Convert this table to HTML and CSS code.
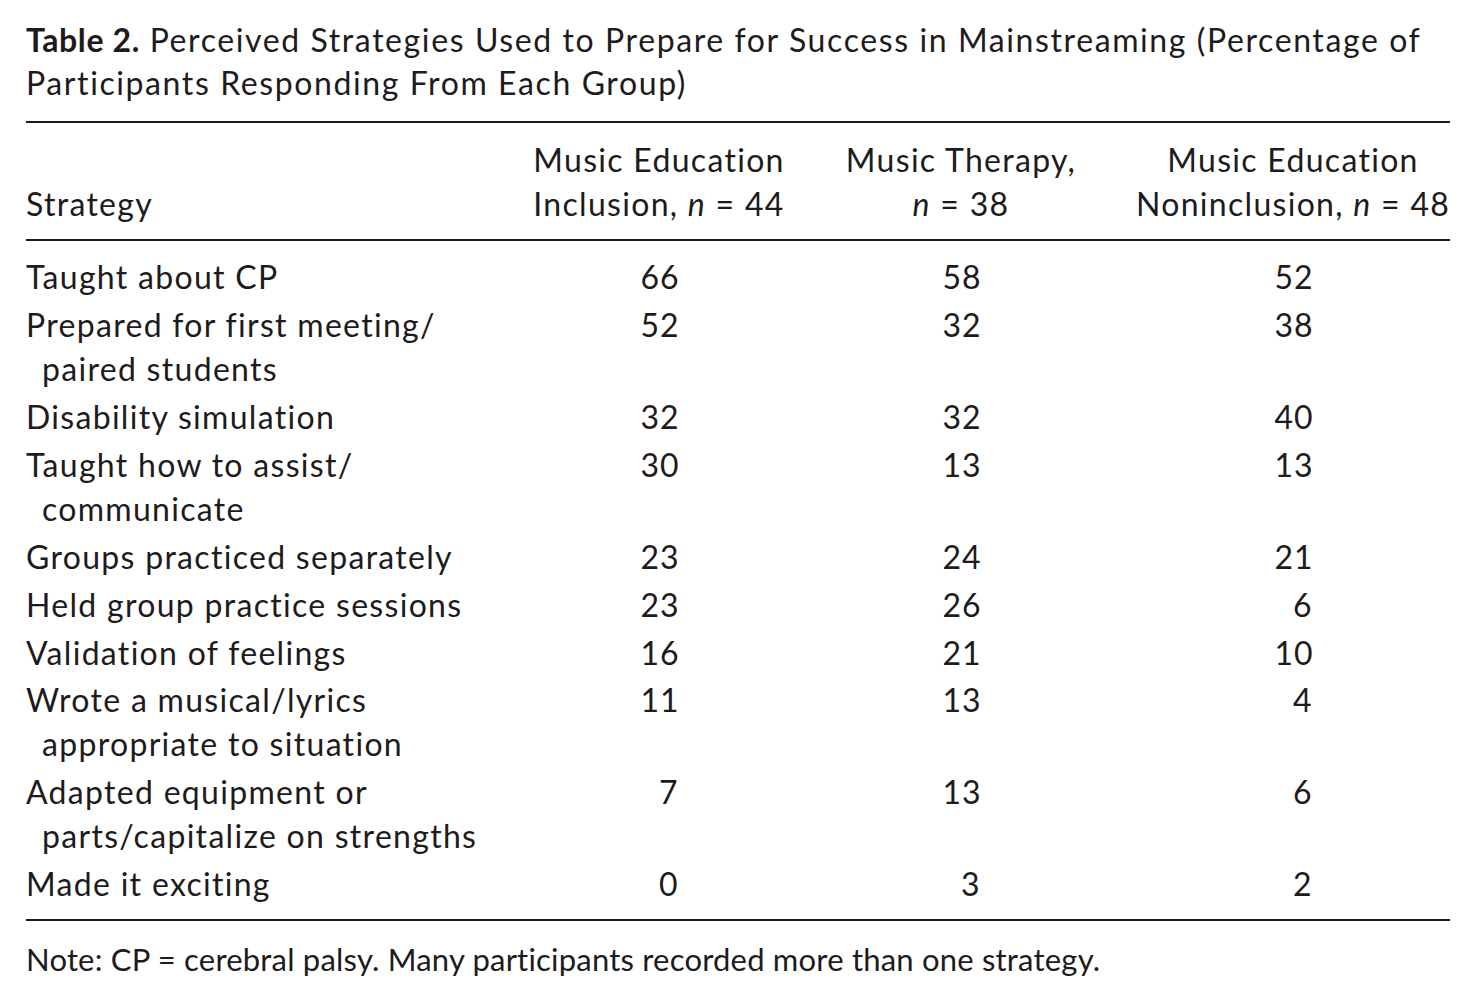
FILE: index.html
```html
<!DOCTYPE html>
<html lang="en">
<head>
<meta charset="utf-8">
<title>Table 2</title>
<link rel="stylesheet" href="styles.css">
</head>
<body>
<div class="page">
  <p class="caption"><b>Table 2.</b> Perceived Strategies Used to Prepare for Success in Mainstreaming (Percentage of<br>Participants Responding From Each Group)</p>
  <div class="table">
    <div class="head">
      <div class="hc first">Strategy</div>
      <div class="hc">Music Education<br>Inclusion, <i>n</i> = 44</div>
      <div class="hc">Music Therapy,<br><i>n</i> = 38</div>
      <div class="hc">Music Education<br>Noninclusion, <i>n</i> = 48</div>
    </div>
    <div class="body">
      <div class="row"><div class="label">Taught about CP</div><div class="num"><span>66</span></div><div class="num"><span>58</span></div><div class="num"><span>52</span></div></div>
      <div class="row"><div class="label">Prepared for first meeting/<br><span class="ind">paired students</span></div><div class="num"><span>52</span></div><div class="num"><span>32</span></div><div class="num"><span>38</span></div></div>
      <div class="row"><div class="label">Disability simulation</div><div class="num"><span>32</span></div><div class="num"><span>32</span></div><div class="num"><span>40</span></div></div>
      <div class="row"><div class="label">Taught how to assist/<br><span class="ind">communicate</span></div><div class="num"><span>30</span></div><div class="num"><span>13</span></div><div class="num"><span>13</span></div></div>
      <div class="row"><div class="label">Groups practiced separately</div><div class="num"><span>23</span></div><div class="num"><span>24</span></div><div class="num"><span>21</span></div></div>
      <div class="row"><div class="label">Held group practice sessions</div><div class="num"><span>23</span></div><div class="num"><span>26</span></div><div class="num"><span>6</span></div></div>
      <div class="row"><div class="label">Validation of feelings</div><div class="num"><span>16</span></div><div class="num"><span>21</span></div><div class="num"><span>10</span></div></div>
      <div class="row"><div class="label">Wrote a musical/lyrics<br><span class="ind">appropriate to situation</span></div><div class="num"><span>11</span></div><div class="num"><span>13</span></div><div class="num"><span>4</span></div></div>
      <div class="row"><div class="label">Adapted equipment or<br><span class="ind">parts/capitalize on strengths</span></div><div class="num"><span>7</span></div><div class="num"><span>13</span></div><div class="num"><span>6</span></div></div>
      <div class="row"><div class="label">Made it exciting</div><div class="num"><span>0</span></div><div class="num"><span>3</span></div><div class="num"><span>2</span></div></div>
    </div>
  </div>
  <p class="note">Note: CP = cerebral palsy. Many participants recorded more than one strategy.</p>
</div>
</body>
</html>
```
FILE: styles.css
```css
html, body {
  margin: 0;
  padding: 0;
  background: #ffffff;
}
body {
  font-family: Lato, "Noto Sans", "DejaVu Sans", sans-serif;
  font-size: 32px;
  letter-spacing: 1.3px;
  color: #1d1b1c;
}
.page {
  width: 1424px;
  padding: 18px 0 0 26px;
}
.caption {
  margin: 0;
  line-height: 43px;
  letter-spacing: 1.6px;
  white-space: nowrap;
}
.caption b {
  font-weight: 700;
  letter-spacing: 0.6px;
}
.table {
  margin-top: 17px;
  border-top: 2px solid #1d1b1c;
  border-bottom: 2px solid #1d1b1c;
}
.head, .row {
  display: grid;
  grid-template-columns: 506px 254px 350px 314px;
}
.head {
  padding: 15px 0 13px;
  line-height: 44px;
  border-bottom: 2px solid #1d1b1c;
}
.hc {
  text-align: center;
  white-space: nowrap;
  align-self: end;
}
.hc.first {
  text-align: left;
}
.body {
  padding: 12px 0 11px;
}
.row {
  padding: 2px 0;
  line-height: 44px;
}
.row:nth-child(n+5) {
  padding: 2px 0 1.8px;
}
.label {
  white-space: nowrap;
}
.ind {
  padding-left: 16px;
}
.num {
  text-align: center;
}
.num span {
  display: inline-block;
  width: 38px;
  text-align: right;
  letter-spacing: 1px;
  margin-right: -1px;
  font-variant-numeric: tabular-nums;
}
.note {
  margin: 16px 0 0;
  line-height: 44px;
  font-size: 31px;
  letter-spacing: 0.2px;
  white-space: nowrap;
}
```
